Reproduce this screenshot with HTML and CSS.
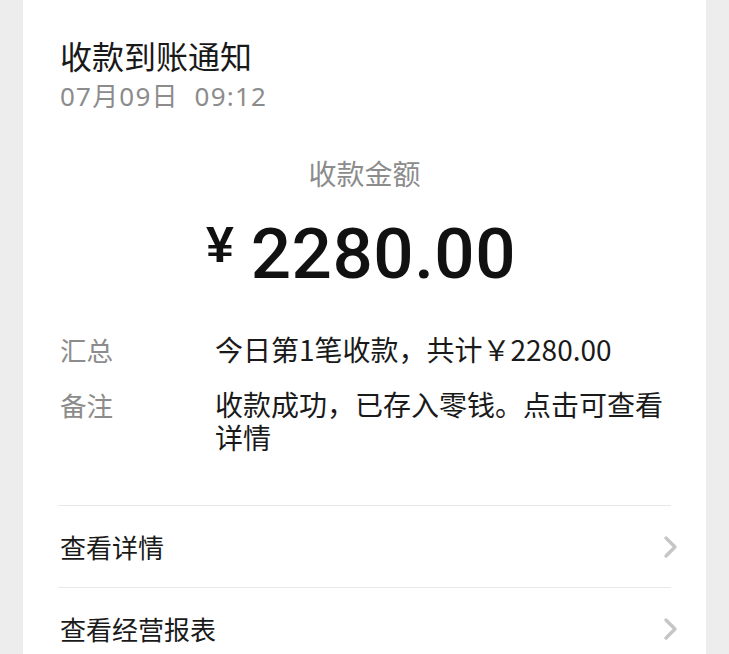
FILE: index.html
```html
<!DOCTYPE html>
<html lang="zh-CN">
<head>
<meta charset="utf-8">
<link rel="stylesheet" href="styles.css">
</head>
<body>
<div class="card">
  <div class="head">
    <div class="title">收款到账通知</div>
    <div class="date">07月09日&nbsp; 09:12</div>
  </div>
  <div class="amount-label">收款金额</div>
  <div class="amount"><span class="yen">¥</span><span class="num">2280.00</span></div>
  <div class="info">
    <div class="row"><div class="label">汇总</div><div class="value">今日第1笔收款，共计￥2280.00</div></div>
    <div class="row"><div class="label">备注</div><div class="value">收款成功，已存入零钱。点击可查看详情</div></div>
  </div>
  <div class="links">
    <div class="link"><span>查看详情</span><svg class="chev" viewBox="0 0 16 24" width="16" height="24"><path d="M3 3 L12 12 L3 21" fill="none" stroke="#c6c6c6" stroke-width="3.4" stroke-linecap="round" stroke-linejoin="round"/></svg></div>
    <div class="link"><span>查看经营报表</span><svg class="chev" viewBox="0 0 16 24" width="16" height="24"><path d="M3 3 L12 12 L3 21" fill="none" stroke="#c6c6c6" stroke-width="3.4" stroke-linecap="round" stroke-linejoin="round"/></svg></div>
  </div>
</div>
</body>
</html>
```
FILE: styles.css
```css
html, body {
  margin: 0;
  padding: 0;
  background: #ededed;
  height: 654px;
  overflow: hidden;
}
body {
  font-family: "Noto Sans CJK SC", "Noto Sans", sans-serif;
  color: #1a1a1a;
}
.card {
  margin: 0 23px;
  background: #fff;
  height: 654px;
  box-sizing: border-box;
  padding-top: 33px;
}
.head {
  padding-left: 37px;
}
.title {
  font-size: 32px;
  line-height: 44px;
  color: #191919;
}
.date {
  margin-top: 2px;
  font-size: 26px;
  line-height: 34px;
  color: #8c8c8c;
  font-family: "Noto Sans", "Noto Sans CJK SC", sans-serif;
  letter-spacing: 1.2px;
}
.amount-label {
  margin-top: 42px;
  text-align: center;
  font-size: 28px;
  line-height: 36px;
  color: #8c8c8c;
}
.amount {
  margin-top: 23px;
  height: 80px;
  display: flex;
  justify-content: center;
  align-items: flex-start;
  color: #111;
}
.yen {
  font-family: "Liberation Sans", sans-serif;
  font-weight: 700;
  font-size: 50px;
  line-height: 50px;
  margin-top: 6px;
  margin-right: 17px;
  margin-left: -7px;
}
.num {
  font-family: Roboto, sans-serif;
  font-weight: 500;
  font-size: 71px;
  line-height: 80px;
  letter-spacing: 0.5px;
}
.info {
  margin-top: 39px;
  padding: 0 34px 0 37px;
  display: flex;
  flex-direction: column;
  gap: 22px;
}
.row {
  display: flex;
  line-height: 33px;
}
.label {
  width: 155px;
  flex: none;
  color: #8c8c8c;
  font-size: 26.5px;
}
.value {
  flex: 1;
  color: #1a1a1a;
  font-size: 28px;
}
.links {
  margin: 51px 35px 0;
}
.link {
  border-top: 1px solid #e8e8e8;
  height: 81px;
  display: flex;
  align-items: center;
  justify-content: space-between;
  font-size: 26px;
  color: #1a1a1a;
}
.link span {
  padding-left: 2px;
}
.chev {
  margin-right: -8px;
}
```
